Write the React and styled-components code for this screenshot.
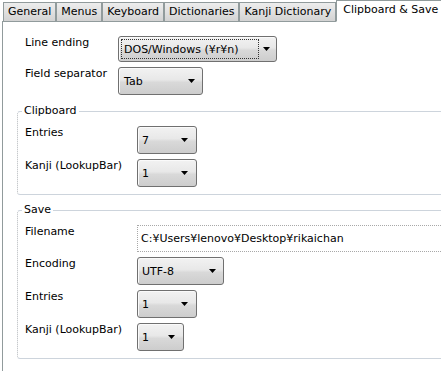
import React from 'react';
import styled, { createGlobalStyle } from 'styled-components';

const GlobalStyle = createGlobalStyle`
  html, body {
    margin: 0;
    padding: 0;
    background: #fff;
  }
  body {
    font-family: "DejaVu Sans", Verdana, sans-serif;
    font-size: 11px;
    color: #000;
  }
`;

const Window = styled.div`
  width: 441px;
  height: 371px;
  overflow: hidden;
  background: #fff;
`;

const TabStrip = styled.div`
  display: flex;
  align-items: flex-end;
  height: 21px;
  margin-left: 2px;
  padding-left: 1px;
  border-bottom: 1px solid #919b9c;
`;

const Tab = styled.div`
  box-sizing: border-box;
  height: ${p => (p.$active ? '22px' : '19px')};
  margin-bottom: ${p => (p.$active ? '-1px' : '0')};
  padding: ${p => (p.$active ? '0 6px' : '0 4px')};
  border: 1px solid #919b9c;
  border-bottom: ${p => (p.$active ? '1px solid #fff' : 'none')};
  background: ${p => (p.$active ? '#fff' : 'linear-gradient(#ededed, #d3d3d3)')};
  line-height: ${p => (p.$active ? '18px' : '17px')};
  white-space: nowrap;
`;

const Panel = styled.div`
  margin-left: 2px;
  border-left: 1px solid #919b9c;
  height: 349px;
  padding: 14px 0 0 14px;
`;

const TopGrid = styled.div`
  display: grid;
  grid-template-columns: 93px auto;
  row-gap: 5px;
  align-items: start;
  padding-left: 8px;
`;

const Group = styled.fieldset`
  margin: ${p => p.$top}px -40px 0 0;
  padding: 8px 0 7px 7px;
  min-width: 0;
  border: 1px solid #cdd4dc;
  border-left: 1px dotted #b4b8bc;
  border-radius: 3px;
`;

const Legend = styled.legend`
  margin-left: -3px;
  padding: 0 2px;
  line-height: 14px;
`;

const GroupGrid = styled.div`
  display: grid;
  grid-template-columns: 112px auto;
  row-gap: 5px;
  align-items: start;
`;

const Label = styled.div`
  line-height: 14px;
  white-space: nowrap;
`;

const SelectBox = styled.div`
  box-sizing: border-box;
  display: flex;
  align-items: center;
  width: ${p => p.$w}px;
  height: ${p => p.$h}px;
  border: 1px solid #707070;
  border-radius: 3px;
  background: linear-gradient(#f2f2f2 0%, #e8e8e8 45%, #d9d9d9 55%, #cdcdcd 100%);
  box-shadow: inset 1px 1px 0 #fafafa;
`;

const SelectText = styled.span`
  flex: 1;
  padding-left: ${p => p.$pad}px;
  white-space: nowrap;
`;

const FocusText = styled.span`
  flex: 1;
  align-self: stretch;
  margin: 2px 0 2px 2px;
  padding-left: 2px;
  border: 1px dotted #333;
  display: flex;
  align-items: center;
  white-space: nowrap;
`;

const Arrow = styled.svg`
  flex: none;
  margin: 0 ${p => p.$right}px 0 4px;
`;

const TextField = styled.div`
  box-sizing: border-box;
  display: flex;
  align-items: center;
  width: 330px;
  height: 27px;
  padding-left: 3px;
  border: 1px dotted #a8a8a8;
  white-space: nowrap;
`;

const Select = ({ value, w, h = 28, pad = 4, right = 7, focused }) => (
  <SelectBox $w={w} $h={h}>
    {focused ? <FocusText>{value}</FocusText> : <SelectText $pad={pad}>{value}</SelectText>}
    <Arrow $right={right} width="7" height="4" viewBox="0 0 7 4">
      <polygon points="0,0 7,0 3.5,4" fill="#000" />
    </Arrow>
  </SelectBox>
);

const tabs = ['General', 'Menus', 'Keyboard', 'Dictionaries', 'Kanji Dictionary', 'Clipboard & Save'];

export default function App() {
  return (
    <Window>
      <GlobalStyle />
      <TabStrip>
        {tabs.map(t => (
          <Tab key={t} $active={t === 'Clipboard & Save'}>
            {t}
          </Tab>
        ))}
      </TabStrip>
      <Panel>
        <TopGrid>
          <Label>Line ending</Label>
          <Select value="DOS/Windows (¥r¥n)" w={159} h={26} right={6} focused />
          <Label>Field separator</Label>
          <Select value="Tab" w={85} pad={5} right={7} />
        </TopGrid>

        <Group $top={9}>
          <Legend>Clipboard</Legend>
          <GroupGrid>
            <Label>Entries</Label>
            <Select value="7" w={60} right={8} />
            <Label>Kanji (LookupBar)</Label>
            <Select value="1" w={60} right={8} />
          </GroupGrid>
        </Group>

        <Group $top={8}>
          <Legend>Save</Legend>
          <GroupGrid>
            <Label>Filename</Label>
            <TextField>C:¥Users¥lenovo¥Desktop¥rikaichan</TextField>
            <Label>Encoding</Label>
            <Select value="UTF-8" w={87} right={7} />
            <Label>Entries</Label>
            <Select value="1" w={60} right={8} />
            <Label>Kanji (LookupBar)</Label>
            <Select value="1" w={47} right={8} />
          </GroupGrid>
        </Group>
      </Panel>
    </Window>
  );
}
